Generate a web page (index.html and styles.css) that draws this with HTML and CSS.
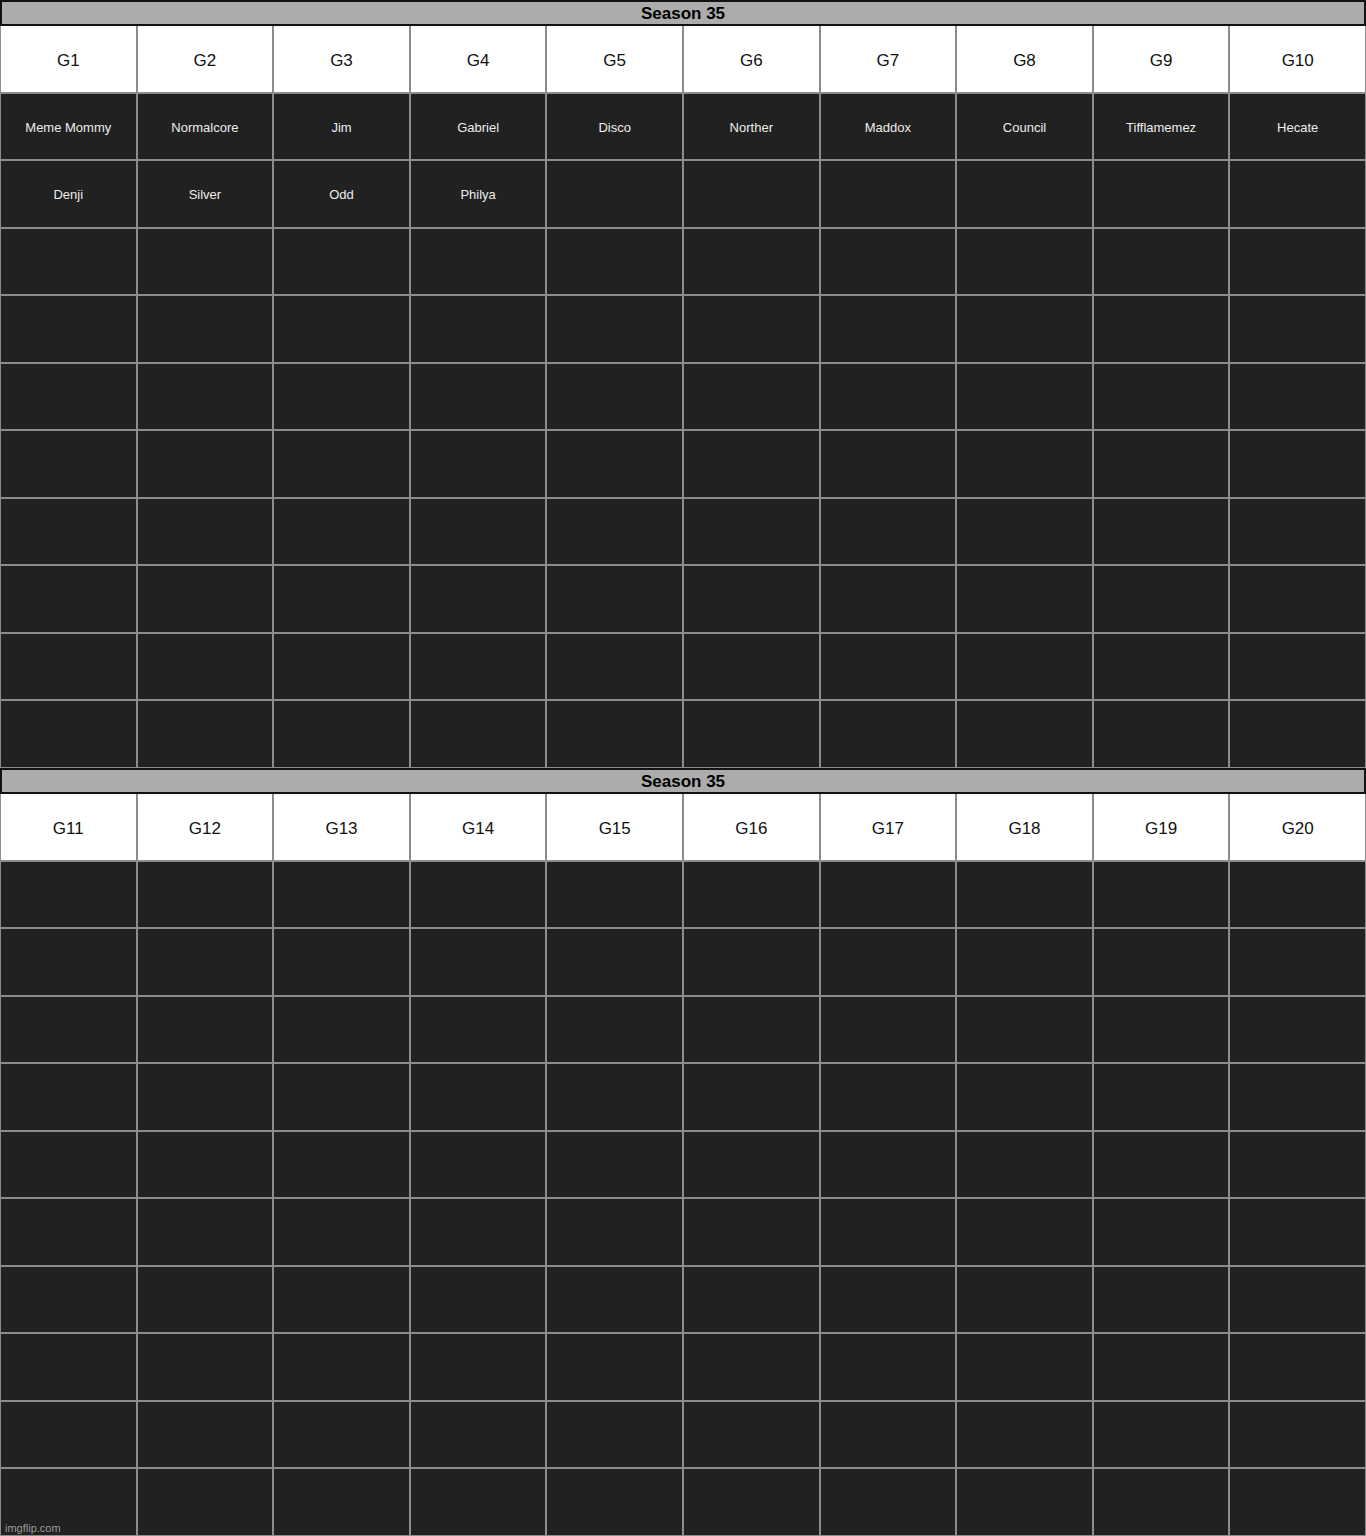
FILE: index.html
```html
<!DOCTYPE html>
<html lang="en">
<head>
    <meta charset="UTF-8">
    <meta name="viewport" content="width=device-width, initial-scale=1.0">
    <title>Season 35</title>
    <link rel="stylesheet" href="styles.css">
</head>
<body>

<div class="board">
    <div class="season">
        <div class="title">Season 35</div>
        <div class="grid" id="grid1"></div>
    </div>
    <div class="season">
        <div class="title">Season 35</div>
        <div class="grid" id="grid2"></div>
    </div>
    <span class="mark">imgflip.com</span>
</div>

<script>
    const names = [
        ['Meme Mommy', 'Normalcore', 'Jim', 'Gabriel', 'Disco', 'Norther', 'Maddox', 'Council', 'Tifflamemez', 'Hecate'],
        ['Denji', 'Silver', 'Odd', 'Philya']
    ];

    function buildGrid(id, start, rows) {
        const grid = document.getElementById(id);
        let html = '';
        for (let c = 0; c < 10; c++) {
            html += `<div class="head">G${start + c}</div>`;
        }
        for (let r = 0; r < 10; r++) {
            for (let c = 0; c < 10; c++) {
                const name = (rows[r] && rows[r][c]) || '';
                html += `<div class="cell">${name}</div>`;
            }
        }
        grid.innerHTML = html;
    }

    buildGrid('grid1', 1, names);
    buildGrid('grid2', 11, []);
</script>

</body>
</html>
```

FILE: styles.css
```css
body {
    margin: 0;
    font-family: "Liberation Sans", Arial, sans-serif;
    background-color: #ffffff;
}
.board {
    position: relative;
    width: 1366px;
}
.season {
    height: 768px;
    display: flex;
    flex-direction: column;
}
.title {
    height: 22px;
    border: 2px solid #111111;
    background-color: #acacac;
    color: #000000;
    font-weight: bold;
    font-size: 17px;
    line-height: 24px;
    text-align: center;
}
.grid {
    flex: 1;
    display: grid;
    grid-template-columns: repeat(10, 1fr);
    grid-template-rows: repeat(11, 1fr);
    gap: 2px;
    padding: 0 1px 1px 1px;
    background-color: #8c8c8c;
}
.head, .cell {
    display: flex;
    align-items: center;
    justify-content: center;
}
.head {
    padding-top: 5px;
    background-color: #ffffff;
    color: #111111;
    font-size: 17px;
}
.cell {
    padding-top: 2px;
    background-color: #212121;
    color: #ededed;
    font-size: 13px;
}
.mark {
    position: absolute;
    left: 5px;
    bottom: 2px;
    font-size: 11px;
    color: #9a9a9a;
}
```
